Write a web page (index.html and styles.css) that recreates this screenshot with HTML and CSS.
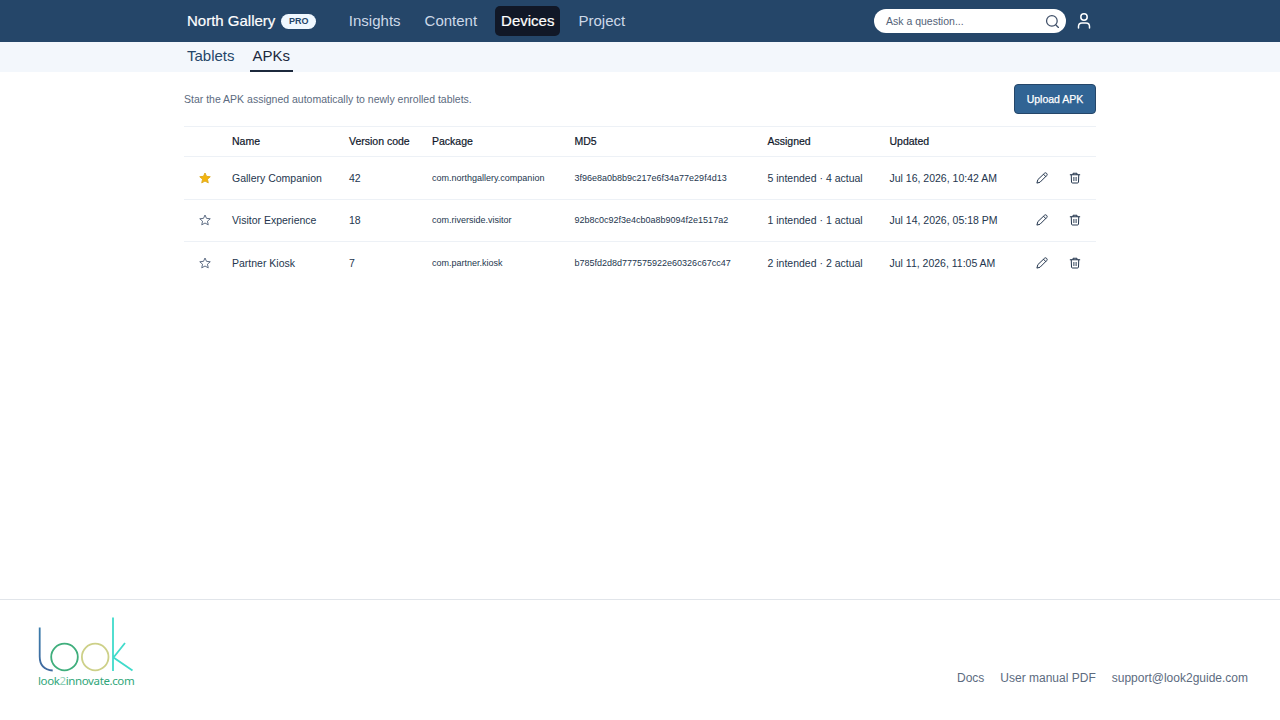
FILE: index.html
```html
<!DOCTYPE html>
<html lang="en">
<head>
    <meta charset="UTF-8">
    <meta name="viewport" content="width=device-width, initial-scale=1.0">
    <title>North Gallery - APKs</title>
    <link rel="stylesheet" href="styles.css">
</head>
<body>
    <svg class="defs">
        <symbol id="star" viewBox="0 0 24 24">
            <path stroke-linejoin="round" d="M12 2l3 6.700 7.500.8-5.600 4.900 1.600 7.300L12 18l-6.500 3.700 1.600-7.300L1.500 9.500l7.500-.8z"/>
        </symbol>
        <symbol id="pencil" viewBox="0 0 24 24">
            <path stroke-linecap="round" stroke-linejoin="round" d="M16 3.500l1-1a3.200 3.200 0 0 1 4.500 4.500L8 20.500 1.800 22.200 3.500 16zM15 4.500l4.500 4.500"/>
        </symbol>
        <symbol id="trash" viewBox="0 0 24 24">
            <path stroke-linecap="round" d="M2.500 5.500h19M8 5V2.500h8V5M4.500 6l.5 14q.2 2 2 2h10q1.800 0 2-2l.5-14"/>
            <path class="bin" d="M9.200 10v8M12 10v8M14.800 10v8"/>
        </symbol>
    </svg>
    <header class="topbar">
        <div class="container topbar-inner">
            <span class="brand">North Gallery</span>
            <span class="badge">PRO</span>
            <nav class="main-nav">
                <a href="#">Insights</a>
                <a href="#">Content</a>
                <a href="#" class="active">Devices</a>
                <a href="#">Project</a>
            </nav>
            <div class="search">
                <span>Ask a question...</span>
                <svg class="search-icon" viewBox="0 0 24 24"><circle cx="11" cy="11" r="8.500"/><path stroke-linecap="round" d="M17.500 17.500l4 4"/></svg>
            </div>
            <svg class="user-icon" viewBox="0 0 14 18"><circle cx="7" cy="5" r="3.200"/><path stroke-linecap="round" d="M1.500 16v-1.500q0-3.500 3.500-3.500h4q3.500 0 3.500 3.500V16"/></svg>
        </div>
    </header>
    <div class="subbar">
        <nav class="container tabs">
            <a href="#">Tablets</a>
            <a href="#" class="active">APKs</a>
        </nav>
    </div>
    <main class="container content">
        <div class="toolbar">
            <p>Star the APK assigned automatically to newly enrolled tablets.</p>
            <button class="upload">Upload APK</button>
        </div>
        <table class="apks">
            <thead>
                <tr>
                    <th class="col-star"></th>
                    <th class="col-name">Name</th>
                    <th class="col-version">Version code</th>
                    <th class="col-package">Package</th>
                    <th class="col-md5">MD5</th>
                    <th class="col-assigned">Assigned</th>
                    <th class="col-updated">Updated</th>
                    <th></th>
                </tr>
            </thead>
            <tbody>
                <tr>
                    <td><svg class="star filled"><use href="#star"/></svg></td>
                    <td>Gallery Companion</td>
                    <td>42</td>
                    <td class="small">com.northgallery.companion</td>
                    <td class="small">3f96e8a0b8b9c217e6f34a77e29f4d13</td>
                    <td>5 intended · 4 actual</td>
                    <td>Jul 16, 2026, 10:42 AM</td>
                    <td><div class="actions"><svg><use href="#pencil"/></svg><svg><use href="#trash"/></svg></div></td>
                </tr>
                <tr>
                    <td><svg class="star"><use href="#star"/></svg></td>
                    <td>Visitor Experience</td>
                    <td>18</td>
                    <td class="small">com.riverside.visitor</td>
                    <td class="small">92b8c0c92f3e4cb0a8b9094f2e1517a2</td>
                    <td>1 intended · 1 actual</td>
                    <td>Jul 14, 2026, 05:18 PM</td>
                    <td><div class="actions"><svg><use href="#pencil"/></svg><svg><use href="#trash"/></svg></div></td>
                </tr>
                <tr>
                    <td><svg class="star"><use href="#star"/></svg></td>
                    <td>Partner Kiosk</td>
                    <td>7</td>
                    <td class="small">com.partner.kiosk</td>
                    <td class="small">b785fd2d8d777575922e60326c67cc47</td>
                    <td>2 intended · 2 actual</td>
                    <td>Jul 11, 2026, 11:05 AM</td>
                    <td><div class="actions"><svg><use href="#pencil"/></svg><svg><use href="#trash"/></svg></div></td>
                </tr>
            </tbody>
        </table>
    </main>
    <footer>
        <div class="logo">
            <svg viewBox="0 0 97 58" width="97" height="58">
                <defs>
                    <linearGradient id="lgrad" x1="0" y1="0" x2="0" y2="1">
                        <stop offset="0" stop-color="#3a7cab"/>
                        <stop offset="1" stop-color="#40699f"/>
                    </linearGradient>
                </defs>
                <path stroke="url(#lgrad)" d="M2.700 10.500v29q0 13 13 14"/>
                <circle stroke="#3fae7c" cx="27.500" cy="40" r="13.300"/>
                <circle stroke="#cdd088" cx="58.200" cy="40" r="13.300"/>
                <path stroke="#40dbcb" d="M76 .5v53.500M88 26L76.500 40.500 95.500 53.500"/>
            </svg>
            <span class="logo-text">look<b>2</b>innovate.com</span>
        </div>
        <div class="links">
            <a href="#">Docs</a>
            <a href="#">User manual PDF</a>
            <a href="#">support@look2guide.com</a>
        </div>
    </footer>
</body>
</html>
```

FILE: styles.css
```css
* {
    box-sizing: border-box;
}
body {
    font-family: "Liberation Sans", Arial, sans-serif;
    font-size: 10.5px;
    margin: 0;
    height: 720px;
    display: flex;
    flex-direction: column;
    background-color: white;
    color: #24364e;
}
a {
    color: inherit;
    text-decoration: none;
}
svg {
    fill: none;
    stroke: currentColor;
}
.defs {
    display: none;
}
.container {
    width: 912px;
    margin: 0 auto;
}
.topbar {
    background-color: #254669;
    color: white;
    height: 42px;
}
.topbar-inner {
    height: 42px;
    display: flex;
    align-items: center;
    padding: 0 5px 0 3px;
}
.brand {
    font-size: 15px;
    line-height: 17px;
    padding-bottom: 1px;
    -webkit-text-stroke: 0.2px;
}
.badge {
    margin-left: 6px;
    width: 35px;
    line-height: 15px;
    border-radius: 8px;
    background-color: #f0f8ff;
    color: #254669;
    font-size: 9px;
    font-weight: bold;
    text-align: center;
}
.main-nav {
    display: flex;
    gap: 12px;
    margin-left: 26.5px;
    font-size: 15px;
    color: #cdd9e8;
}
.main-nav a {
    line-height: 30px;
    padding: 0 6px;
    border-radius: 5px;
}
.main-nav .active {
    background-color: #111827;
    color: white;
    -webkit-text-stroke: 0.2px;
}
.search {
    margin-left: auto;
    width: 192px;
    height: 24px;
    padding: 0 6px 0 12px;
    border-radius: 12px;
    background-color: white;
    color: #536277;
    display: flex;
    align-items: center;
    justify-content: space-between;
}
.search-icon {
    width: 15px;
    height: 15px;
    stroke: #405069;
    stroke-width: 2;
}
.user-icon {
    width: 14px;
    height: 18px;
    margin-left: 11px;
    stroke-width: 1.5;
}
.subbar {
    height: 30px;
    background-color: #f3f7fc;
}
.tabs {
    display: flex;
    gap: 12px;
    font-size: 15px;
    color: #254669;
}
.tabs a {
    height: 30px;
    line-height: 28px;
    padding: 0 3px;
}
.tabs .active {
    color: #1c293c;
    border-bottom: 2px solid #1c293c;
}
.content {
    flex: 1;
}
.toolbar {
    height: 54px;
    display: flex;
    align-items: center;
    justify-content: space-between;
    color: #5c6b80;
}
.toolbar p {
    margin: 0;
}
.upload {
    width: 82px;
    height: 30px;
    padding: 0 0 1px;
    border: 1px solid #254669;
    border-radius: 4px;
    background-color: #316494;
    color: white;
    font: inherit;
    -webkit-text-stroke: 0.25px;
}
.apks {
    width: 100%;
    table-layout: fixed;
    border-collapse: separate;
    border-spacing: 0;
}
.apks th, .apks td {
    padding: 0;
    text-align: left;
    white-space: nowrap;
    border-top: 1px solid #edf1f6;
}
.apks th {
    height: 30px;
    padding-bottom: 1px;
    font-weight: normal;
    color: #0f172a;
    -webkit-text-stroke: 0.2px;
}
.apks td {
    height: 42.5px;
}
.apks .small {
    font-size: 9px;
}
.col-star { width: 48px; }
.col-name { width: 117px; }
.col-version { width: 83px; }
.col-package { width: 142.5px; }
.col-md5 { width: 193px; }
.col-assigned { width: 122px; }
.col-updated { width: 140px; }
.star {
    display: block;
    width: 12px;
    height: 12px;
    margin-left: 15px;
    stroke: #5f6e85;
    stroke-width: 2;
}
.star.filled {
    fill: #f5b50b;
    stroke: #e0ad25;
}
.actions {
    display: flex;
    justify-content: flex-end;
    gap: 21px;
    padding-right: 15px;
}
.actions svg {
    width: 12px;
    height: 12px;
    stroke-width: 2;
}
.bin {
    stroke-width: 1.3;
}
footer {
    height: 121px;
    border-top: 1px solid #e1e5ea;
    padding: 17px 32px 0 37px;
    display: flex;
    justify-content: space-between;
    align-items: flex-start;
}
.logo svg {
    display: block;
    stroke-width: 1.8;
}
.logo-text {
    display: block;
    margin: -1px 0 0 1px;
    font-family: "Noto Sans", sans-serif;
    font-size: 11.5px;
    letter-spacing: -0.38px;
    line-height: 14px;
    color: #30a679;
}
.logo-text b {
    font-weight: normal;
    color: #91cfb8;
}
.links {
    display: flex;
    gap: 16px;
    margin-top: 54px;
    font-size: 12px;
    line-height: 14px;
    color: #5c6b80;
}
```
